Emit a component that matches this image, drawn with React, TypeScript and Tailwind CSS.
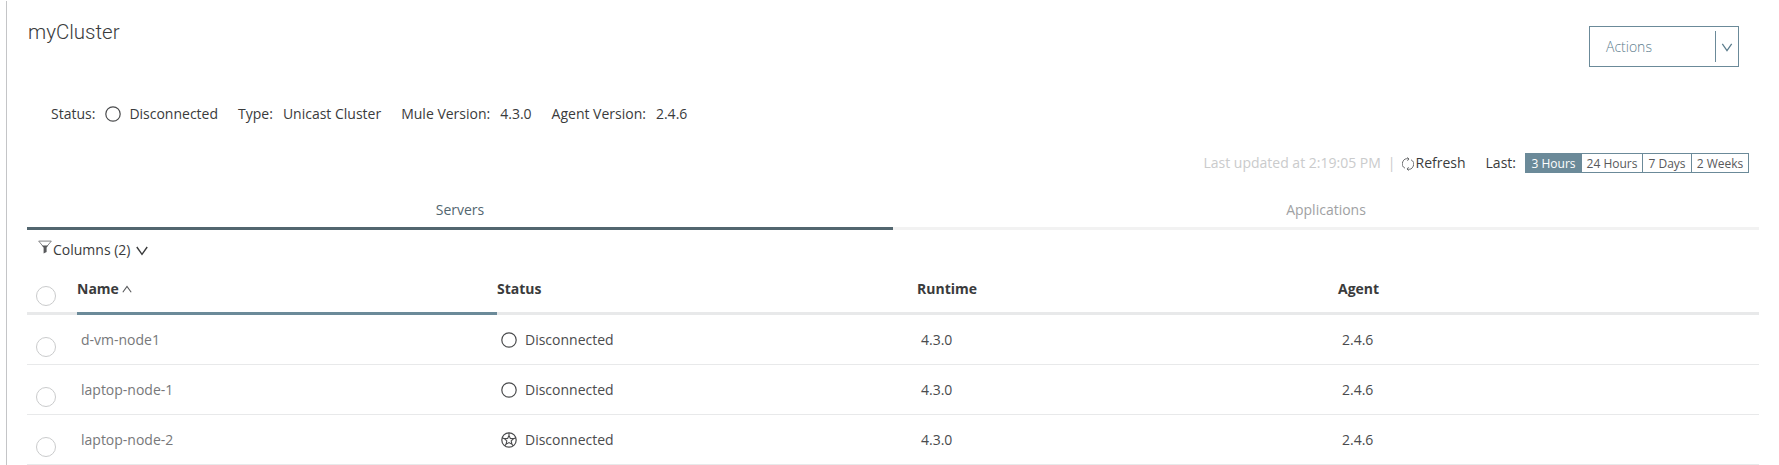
import React from "react";

const info = [
  { label: "Type:", value: "Unicast Cluster" },
  { label: "Mule Version:", value: "4.3.0" },
  { label: "Agent Version:", value: "2.4.6" },
];

const rows = [
  { name: "d-vm-node1", star: false },
  { name: "laptop-node-1", star: false },
  { name: "laptop-node-2", star: true },
];

const columns = "grid grid-cols-[50px_420px_420px_421px_1fr]";

function StatusIcon({ star = false }: { star?: boolean }) {
  return (
    <svg className="size-4 shrink-0" viewBox="0 0 16 16" fill="none" stroke="#4a4b4d" strokeWidth="1.2">
      <circle cx="8" cy="8" r="7.2" />
      {star && (
        <path
          d="M8 3.4l1.35 3 3.25.35-2.4 2.2.7 3.25L8 10.6l-2.9 1.6.7-3.25-2.4-2.2 3.25-.35zM8 3.4V.8M12.6 6.75l2.2-.95M10.9 12.2l1.4 1.8M5.1 12.2L3.7 14M3.4 6.75l-2.2-.95"
          strokeWidth="1.1"
        />
      )}
    </svg>
  );
}

function Radio() {
  return <span className="block size-5 rounded-full border border-[#cacbcc]" />;
}

function Chevron({ className }: { className: string }) {
  return (
    <svg className={className} viewBox="0 0 12 10" fill="none" stroke="currentColor" strokeWidth="1.4">
      <path d="M.8 1L6 8.4 11.2 1" />
    </svg>
  );
}

export default function App() {
  return (
    <div className="h-[465px] overflow-hidden bg-white pt-px pl-[6px] font-['Open_Sans',sans-serif] text-sm leading-5 text-[#3a3b3c]">
      <div className="h-full border-l border-[#c4c5c7] pr-5 pl-5">
        <header className="flex h-[66px] items-start justify-between pr-5">
          <h1 className="pt-[18px] pl-px font-['Roboto',sans-serif] text-[20.5px] leading-[26px] font-light text-[#3a3b3c]">myCluster</h1>
          <button className="mt-[25px] flex h-[41px] w-[150px] items-center border border-[#6b8a99] pl-4 font-light text-[#5c7d8d]">
            <span className="flex-1 text-left">Actions</span>
            <span className="flex h-[31px] w-[23px] items-center justify-center border-l border-[#6b8a99]">
              <Chevron className="mt-[2px] h-[9px] w-3" />
            </span>
          </button>
        </header>

        <div className="mt-[37px] flex h-5 items-center pl-6">
          <span>Status:</span>
          <span className="mr-2 ml-[10px]"><StatusIcon /></span>
          <span>Disconnected</span>
          {info.map((item) => (
            <span key={item.label} className="ml-5 flex gap-[10px]">
              <span>{item.label}</span>
              <span>{item.value}</span>
            </span>
          ))}
        </div>

        <div className="mt-[29px] flex h-5 items-center justify-end pr-[10px]">
          <span className="text-[#cacbcc]">Last updated at 2:19:05 PM</span>
          <span className="ml-[7px] text-[#cacbcc]">|</span>
          <svg className="mt-[2px] ml-[6px] h-[14px] w-3" viewBox="0 0 12 14" fill="none" stroke="#6d6e70" strokeWidth="1">
            <path d="M3 11.2A5 5 0 0 1 6.8 2M9 2.8A5 5 0 0 1 5.2 12M5.4.4L7 2 5.4 3.8M6.6 10.2L5 12l1.6 1.6" />
          </svg>
          <span className="ml-[2px]">Refresh</span>
          <span className="ml-5">Last:</span>
          <div className="ml-[9px] flex h-5 border border-[#6b8a99] text-xs leading-[19px] text-[#58595b]">
            <span className="w-[56px] bg-[#6b8a99] pr-px text-center text-white">3 Hours</span>
            <span className="w-[60px] text-center">24 Hours</span>
            <span className="w-[49px] border-l border-[#6b8a99] text-center">7 Days</span>
            <span className="w-[57px] border-l border-[#6b8a99] text-center">2 Weeks</span>
          </div>
        </div>

        <nav className="mt-[27px] grid h-[30px] grid-cols-2 text-center">
          <span className="border-b-3 border-[#52666f] text-[#52666f]">Servers</span>
          <span className="border-b-3 border-[#f2f2f2] text-[#a0a1a3]">Applications</span>
        </nav>

        <div className="flex h-10 items-start pt-[10px] pl-[11px]">
          <svg className="h-[14px] w-[14px]" viewBox="0 0 14 14">
            <path d="M.7 1.1h12.6L8.6 6.8H5.4z" fill="none" stroke="#77787a" strokeWidth="0.9" />
            <path d="M3.9 5.4h6.2L8.6 7.4v4.6l-3 1.4V7.4z" fill="#58595b" />
          </svg>
          <span className="ml-px">Columns (2)</span>
          <Chevron className="mt-[6px] ml-[6px] h-[10px] w-3" />
        </div>

        <div className={`${columns} h-[45px] font-bold`}>
          <div className="border-b-3 border-[#e8e9ea] pt-4 pl-[9px]"><Radio /></div>
          <div className="flex items-start border-b-3 border-[#6b8a99] pt-[9px]">
            Name
            <svg className="mt-[6px] ml-[3px] h-2 w-[10px]" viewBox="0 0 10 8" fill="none" stroke="#58595b" strokeWidth="1.1">
              <path d="M.8 7.2L5 1.4l4.2 5.8" />
            </svg>
          </div>
          <div className="border-b-3 border-[#e8e9ea] pt-[9px]">Status</div>
          <div className="border-b-3 border-[#e8e9ea] pt-[9px]">Runtime</div>
          <div className="border-b-3 border-[#e8e9ea] pt-[9px]">Agent</div>
        </div>

        {rows.map((row) => (
          <div key={row.name} className={`${columns} h-[50px] border-b border-[#e8e9ea] pt-[15px] text-[#4a4b4d]`}>
            <div className="pt-[7px] pl-[9px]"><Radio /></div>
            <div className="pl-1 text-[#77787a]">{row.name}</div>
            <div className="flex h-5 items-center gap-2 pl-1"><StatusIcon star={row.star} />Disconnected</div>
            <div className="pl-1">4.3.0</div>
            <div className="pl-1">2.4.6</div>
          </div>
        ))}
      </div>
    </div>
  );
}
